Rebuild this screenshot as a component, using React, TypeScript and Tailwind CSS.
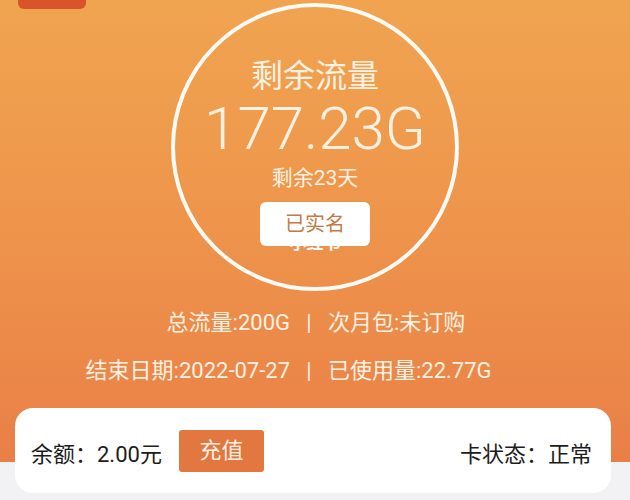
import React from "react";

const font = { fontFamily: 'Roboto, "Noto Sans CJK SC", sans-serif' };

const StatRow = ({ left, right }: { left: string; right: string }) => (
  <div className="grid grid-cols-[290px_38px_1fr] items-center text-[22px] leading-[28px] text-[#fdf1e2]">
    <span className="text-right">{left}</span>
    <span className="text-center">|</span>
    <span>{right}</span>
  </div>
);

export default function App() {
  return (
    <div className="relative h-[500px] w-[630px] overflow-hidden bg-[#f2f2f4]" style={font}>
      <div className="relative flex h-[462px] flex-col items-center bg-gradient-to-b from-[#f0a450] via-[#ee944b] to-[#e97f47]">
        <div className="absolute left-[18px] top-0 h-[9px] w-[68px] rounded-b-md bg-[#d9532b]" />

        <div className="mt-[3px] flex h-[288px] w-[288px] flex-col items-center rounded-full border-4 border-[#fffaf3] text-[#fdf1e2]">
          <div className="mt-[49px] text-[32px] leading-[40px]">剩余流量</div>
          <div className="mt-[1px] text-[60px] font-light leading-[64px]">177.23G</div>
          <div className="mt-[3px] text-[21px] leading-[28px]">剩余23天</div>
          <div className="relative mt-[10px] flex flex-col items-center">
            <div className="h-[44px] w-[110px]" />
            <div className="-mt-[14px] text-[17px] font-bold leading-[22px] text-white">小红书</div>
            <div className="absolute left-0 top-0 flex h-[44px] w-[110px] items-center justify-center rounded-md bg-white text-[20px] text-[#c47a45]">
              已实名
            </div>
          </div>
        </div>

        <div className="mt-[18px] flex w-full flex-col gap-[20px]">
          <StatRow left="总流量:200G" right="次月包:未订购" />
          <StatRow left="结束日期:2022-07-27" right="已使用量:22.77G" />
        </div>
      </div>

      <div className="relative ml-[15px] mr-[19px] -mt-[54px] flex h-[85px] items-center justify-between rounded-[18px] bg-white pl-[16px] pr-[19px] text-[22px] text-[#1c1c1c]">
        <div className="flex items-center">
          <span className="mt-[8px]">余额：2.00元</span>
          <button className="ml-[17px] h-[42px] w-[85px] rounded-[3px] bg-[#e2773f] text-[22px] text-[#fdf0e4]">
            充值
          </button>
        </div>
        <span className="mt-[8px]">卡状态：正常</span>
      </div>
    </div>
  );
}
